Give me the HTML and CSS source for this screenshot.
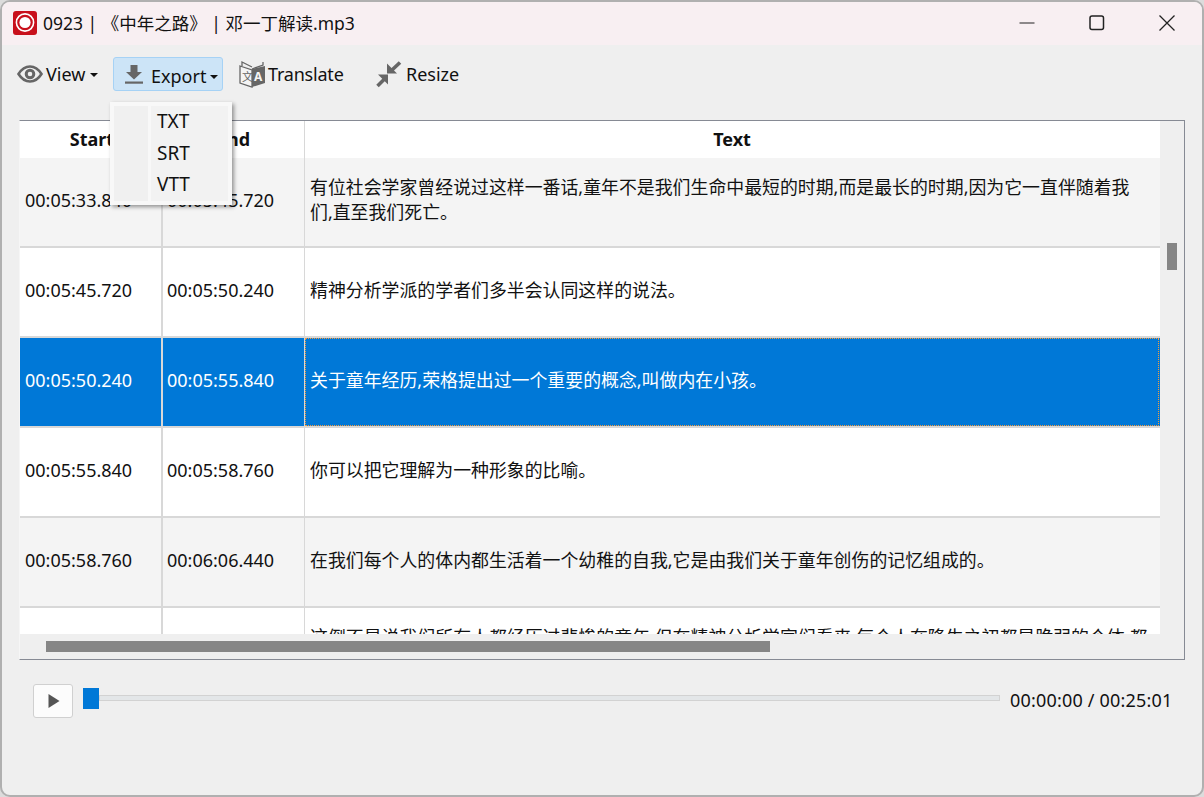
FILE: index.html
```html
<!DOCTYPE html>
<html lang="zh">
<head>
<meta charset="utf-8">
<title>0923 | 《中年之路》 | 邓一丁解读.mp3</title>
<link rel="stylesheet" href="styles.css">
</head>
<body>
<div class="window">
  <header class="titlebar">
    <svg class="app-icon" width="24" height="24" viewBox="0 0 24 24"><rect width="24" height="24" rx="3" fill="#c8101c"/><circle cx="12" cy="11.5" r="8.6" fill="none" stroke="#fff" stroke-width="1.6"/><circle cx="12" cy="11.5" r="5.6" fill="#fff"/></svg>
    <span class="title">0923 | 《中年之路》 | 邓一丁解读.mp3</span>
    <div class="win-controls">
      <span class="win-btn"><svg width="16" height="16" viewBox="0 0 16 16"><path d="M0.5 8h15" stroke="#222" stroke-width="1.2"/></svg></span>
      <span class="win-btn"><svg width="16" height="16" viewBox="0 0 16 16"><rect x="1" y="1" width="13.5" height="13.5" rx="2" fill="none" stroke="#222" stroke-width="1.5"/></svg></span>
      <span class="win-btn"><svg width="16" height="16" viewBox="0 0 16 16"><path d="M0.5 0.5l15 15M15.5 0.5l-15 15" stroke="#222" stroke-width="1.3"/></svg></span>
    </div>
  </header>

  <nav class="toolbar">
    <div class="tool tool-view">
      <svg width="26" height="18" viewBox="0 0 26 18"><path d="M1.500 9C5 3.500 9 1.500 13 1.500S21 3.500 24.500 9C21 14.500 17 16.500 13 16.500S5 14.500 1.500 9Z" fill="none" stroke="#666" stroke-width="2.600"/><circle cx="13" cy="9" r="3.800" fill="none" stroke="#666" stroke-width="3"/></svg>
      <span class="tool-label">View</span><i class="caret"></i>
    </div>
    <div class="tool tool-export">
      <svg width="18" height="20" viewBox="0 0 18 20"><path d="M5.500 1h7v7h4.500l-8 7.500L1 8h4.500Z" fill="#666"/><rect y="17.500" width="18" height="2.200" fill="#666"/></svg>
      <span class="tool-label">Export</span><i class="caret"></i>
    </div>
    <div class="tool tool-translate">
      <svg width="27" height="28" viewBox="0 0 27 28"><path d="M1 6l12 4v17L1 23Z" fill="#f4f4f4" stroke="#666" stroke-width="1.300"/><path d="M3 6V2l10 5" fill="none" stroke="#666" stroke-width="1.300"/><path d="M24 2v3l-11 4" fill="none" stroke="#666" stroke-width="1.300"/><path d="M13 9l13-3v17l-13 4Z" fill="#666"/><text x="3" y="21" class="glyph-zh">文</text><text x="15" y="21" class="glyph-en">A</text></svg>
      <span class="tool-label">Translate</span>
    </div>
    <div class="tool tool-resize">
      <svg width="27" height="27" viewBox="0 0 27 27"><path d="M25 1.500L17 9" stroke="#666" stroke-width="3.600" fill="none"/><path d="M12 2.500V12.500H22Z" fill="#666"/><path d="M2.500 25l7.500-7.500" stroke="#666" stroke-width="3.600" fill="none"/><path d="M3 13.500H13V23.500Z" fill="#666"/></svg>
      <span class="tool-label">Resize</span>
    </div>
  </nav>

  <section class="frame">
    <div class="viewport">
      <div class="row head">
        <div class="cell c1">Start</div>
        <div class="cell c2">End</div>
        <div class="cell c3">Text</div>
      </div>
      <div class="row alt row-tall">
        <div class="cell c1">00:05:33.840</div>
        <div class="cell c2">00:05:45.720</div>
        <div class="cell c3">有位社会学家曾经说过这样一番话,童年不是我们生命中最短的时期,而是最长的时期,因为它一直伴随着我们,直至我们死亡。</div>
      </div>
      <div class="row row-tall">
        <div class="cell c1">00:05:45.720</div>
        <div class="cell c2">00:05:50.240</div>
        <div class="cell c3">精神分析学派的学者们多半会认同这样的说法。</div>
      </div>
      <div class="row selected row-tall">
        <div class="cell c1">00:05:50.240</div>
        <div class="cell c2">00:05:55.840</div>
        <div class="cell c3">关于童年经历,荣格提出过一个重要的概念,叫做内在小孩。</div>
      </div>
      <div class="row row-tall">
        <div class="cell c1">00:05:55.840</div>
        <div class="cell c2">00:05:58.760</div>
        <div class="cell c3">你可以把它理解为一种形象的比喻。</div>
      </div>
      <div class="row alt row-tall">
        <div class="cell c1">00:05:58.760</div>
        <div class="cell c2">00:06:06.440</div>
        <div class="cell c3">在我们每个人的体内都生活着一个幼稚的自我,它是由我们关于童年创伤的记忆组成的。</div>
      </div>
      <div class="row row-tall">
        <div class="cell c1">00:06:06.440</div>
        <div class="cell c2">00:06:16.920</div>
        <div class="cell c3">这倒不是说我们所有人都经历过悲惨的童年,但在精神分析学家们看来,每个人在降生之初都是脆弱的个体,都需要依赖他人才能生存。</div>
      </div>
    </div>
    <div class="vscroll"><div class="vthumb"></div></div>
    <div class="hscroll"><div class="hthumb"></div></div>
    <div class="corner"></div>
  </section>

  <footer class="player">
    <button class="play" type="button"><svg width="12" height="14" viewBox="0 0 12 14"><path d="M0.500 0L11.500 7L0.500 14Z" fill="#555"/></svg></button>
    <div class="slider"><div class="handle"></div><div class="groove"></div></div>
    <span class="time">00:00:00 / 00:25:01</span>
  </footer>

  <div class="menu">
    <div class="menu-gutter"></div>
    <div class="menu-items">
      <div class="menu-item">TXT</div>
      <div class="menu-item">SRT</div>
      <div class="menu-item">VTT</div>
    </div>
  </div>
</div>
</body>
</html>
```

FILE: styles.css
```css
* { box-sizing: border-box; }
html, body { margin: 0; padding: 0; }
body {
  width: 1204px;
  height: 797px;
  overflow: hidden;
  background: #dcdcdc;
  font-family: "Noto Sans", "Noto Sans CJK SC", sans-serif;
  font-size: 18px;
  color: #111;
}
.window {
  position: relative;
  width: 1204px;
  height: 797px;
  border: 2px solid #b0b0b0;
  border-radius: 10px;
  background: #efefef;
  overflow: hidden;
}
.titlebar {
  display: flex;
  align-items: center;
  height: 43px;
  padding-left: 11px;
  background: #f8eff2;
}
.app-icon { margin-top: -1px; flex: none; }
.title { margin: -3px 0 0 6px; font-size: 17.500px; white-space: pre; }
.win-controls { margin-left: auto; display: flex; margin-top: -1px; }
.win-btn { width: 70px; height: 30px; display: flex; align-items: center; justify-content: center; }

.toolbar {
  display: flex;
  align-items: flex-start;
  height: 75px;
  padding: 12px 0 0 15px;
}
.tool { display: flex; align-items: center; height: 34px; flex: none; }
.tool-view { width: 96px; }
.tool-view .tool-label { margin-left: 3px; }
.tool-view .caret { margin-left: 5px; }
.tool-export {
  width: 110px;
  padding: 3px 0 0 11px;
  background: #cce4f7;
  border: 1px solid #a6d2f5;
  border-radius: 3px;
}
.tool-export svg { margin-top: -4px; }
.tool-export .tool-label { margin-left: 8px; }
.tool-export .caret { margin-left: 4px; }
.tool-translate { margin-left: 16px; width: 136px; }
.tool-translate .tool-label { margin-left: 2px; letter-spacing: -.2px; }
.tool-resize .tool-label { margin-left: 4px; }
.caret {
  display: block;
  width: 0;
  height: 0;
  border-left: 4px solid transparent;
  border-right: 4px solid transparent;
  border-top: 4.500px solid #111;
  margin-top: 2px;
}
.glyph-zh { font: 11px "Noto Sans CJK SC", sans-serif; fill: #666; }
.glyph-en { font: bold 12px "Noto Sans", sans-serif; fill: #f4f4f4; }

.frame {
  display: grid;
  grid-template-columns: 1140px 24px;
  grid-template-rows: 513px 25px;
  width: 1166px;
  height: 540px;
  margin-left: 17px;
  border: 1px solid #868a94;
  border-left-color: #f6f6f6;
  background: #efefef;
}
.viewport { overflow: hidden; background: #fff; }
.row {
  display: grid;
  grid-template-columns: 143px 142px 854px;
  height: 90px;
  background: #fff;
}
.row.alt { background: #f4f4f4; }
.row-tall { border-bottom: 2px solid #d8d8d8; }
.row.head { height: 37px; font-weight: 700; text-align: center; }
.row.head .cell { display: block; line-height: 36px; padding: 0; font-size: 18px; }
.row.head .c1 { padding-left: 3px; }
.cell {
  display: flex;
  align-items: center;
  padding: 0 0 4px 5px;
  line-height: 25px;
  white-space: nowrap;
}
.c1 { border-right: 2px solid #d8d8d8; }
.c2 { border-right: 1px solid #d8d8d8; padding-left: 4px; }
.c3 { white-space: normal; padding-right: 10px; font-size: 17.900px; }
.row.selected { background: #0078d7; color: #fff; }
.row.selected .c3 { outline: 1px dotted #f59a3c; outline-offset: -1px; }

.vscroll { padding: 122px 0 0 7px; }
.vthumb { width: 10px; height: 27px; background: #868686; }
.hscroll { padding: 7px 0 0 26px; }
.hthumb { width: 724px; height: 11px; background: #868686; }

.player {
  display: flex;
  align-items: center;
  margin-top: 24px;
  padding-left: 31px;
}
.play {
  display: flex;
  align-items: center;
  justify-content: center;
  width: 40px;
  height: 34px;
  padding: 0 0 0 2px;
  background: #fcfcfc;
  border: 1px solid #d0d0d0;
  border-radius: 3px;
}
.slider { display: flex; align-items: center; margin-left: 10px; width: 917px; margin-top: -6px; }
.handle { width: 16px; height: 21px; background: #0078d7; flex: none; }
.groove { flex: 1; height: 6px; background: #e3e6e8; border: 1px solid #d2d2d2; }
.time { margin: -2px 0 0 10px; white-space: nowrap; letter-spacing: .19px; }

.menu {
  position: absolute;
  left: 108px;
  top: 100px;
  display: flex;
  gap: 3px;
  width: 122px;
  height: 103px;
  padding: 4px;
  background: #f8f8f8;
  box-shadow: 2px 2px 4px rgba(0,0,0,.4);
}
.menu-gutter { width: 34px; background: #f0f0f0; }
.menu-items { flex: 1; padding: 0 0 0 6px; background: #f2f2f2; font-size: 19px; }
.menu-item { height: 31.500px; line-height: 31px; }
```
